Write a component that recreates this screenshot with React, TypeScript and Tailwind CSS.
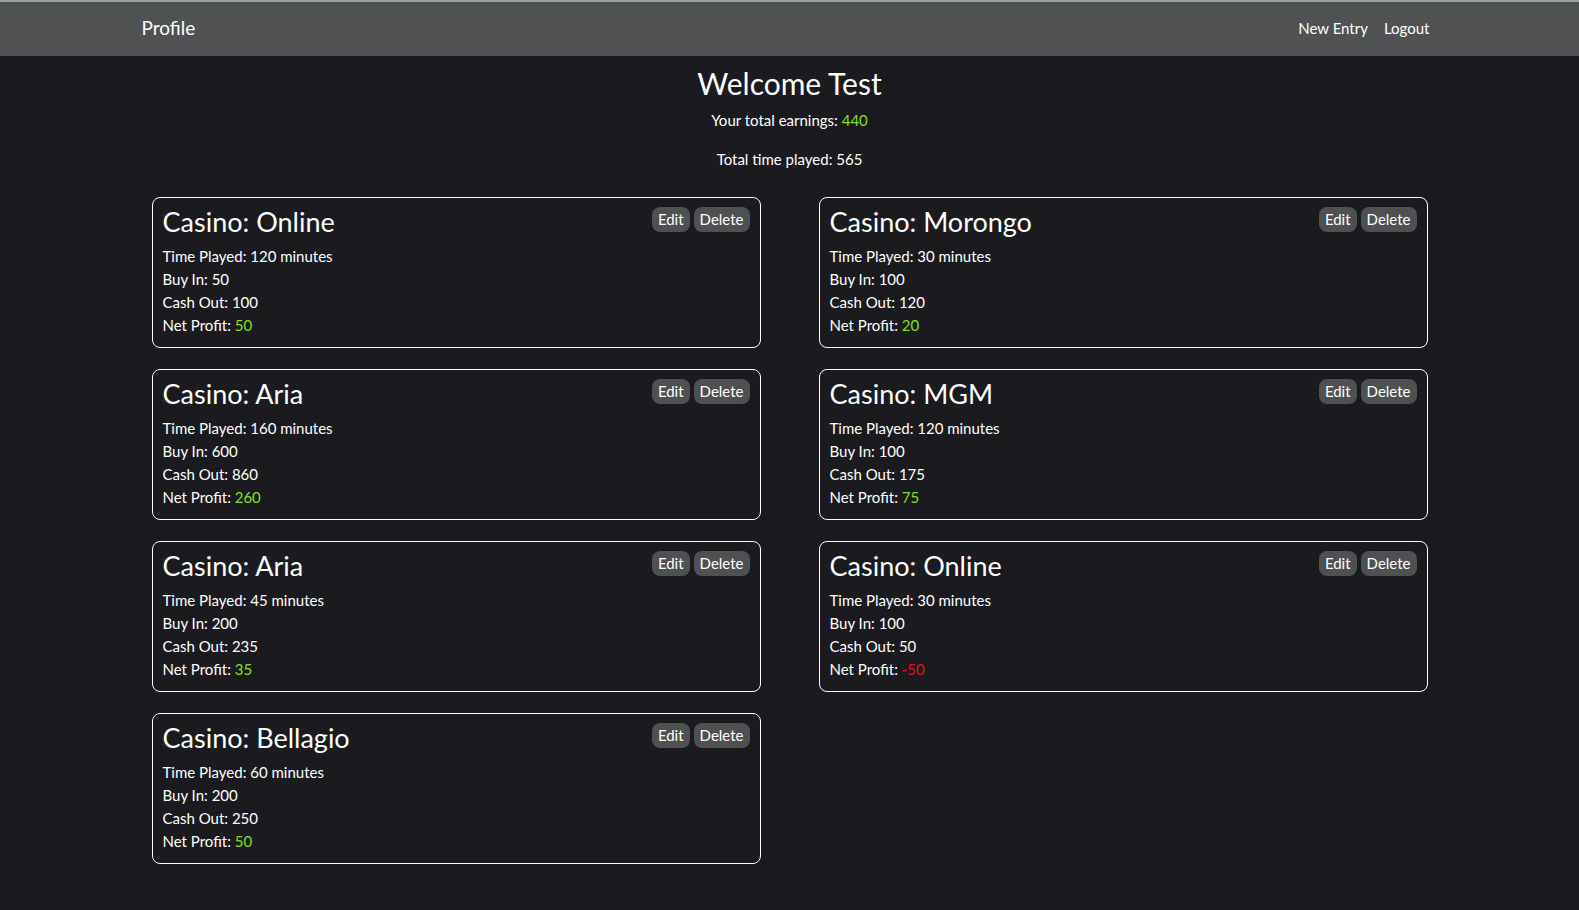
import React from 'react';

type Session = {
  casino: string;
  minutes: number;
  buyIn: number;
  cashOut: number;
};

const sessions: Session[] = [
  { casino: 'Online', minutes: 120, buyIn: 50, cashOut: 100 },
  { casino: 'Morongo', minutes: 30, buyIn: 100, cashOut: 120 },
  { casino: 'Aria', minutes: 160, buyIn: 600, cashOut: 860 },
  { casino: 'MGM', minutes: 120, buyIn: 100, cashOut: 175 },
  { casino: 'Aria', minutes: 45, buyIn: 200, cashOut: 235 },
  { casino: 'Online', minutes: 30, buyIn: 100, cashOut: 50 },
  { casino: 'Bellagio', minutes: 60, buyIn: 200, cashOut: 250 },
];

const SessionCard: React.FC<{ s: Session }> = ({ s }) => {
  const net = s.cashOut - s.buyIn;
  return (
    <div className="border border-white rounded-[8px] px-[10px] pt-[7px] pb-[10px] h-[151px]">
      <div className="flex justify-between items-start">
        <h2 className="text-[27px] leading-[34px] text-white">Casino: {s.casino}</h2>
        <div className="flex gap-[4px] mt-[2px]">
          <button className="bg-[#4f5052] text-white text-[15px] leading-[25px] px-[6px] rounded-[8px]">Edit</button>
          <button className="bg-[#4f5052] text-white text-[15px] leading-[25px] px-[6px] rounded-[8px]">Delete</button>
        </div>
      </div>
      <div className="mt-[6px] text-[15px] leading-[23px] text-white">
        <p>Time Played: {s.minutes} minutes</p>
        <p>Buy In: {s.buyIn}</p>
        <p>Cash Out: {s.cashOut}</p>
        <p>
          Net Profit: <span className={net >= 0 ? 'text-[#80e020]' : 'text-[#e3141a]'}>{net}</span>
        </p>
      </div>
    </div>
  );
};

export default function App() {
  return (
    <div className="min-h-[910px] bg-[#1b1b1f] text-white font-['Lato','Noto_Sans',sans-serif]">
      <nav className="h-[56px] bg-[#505153] border-t-[2px] border-[#9aa39b]">
        <div className="w-[1296px] mx-auto h-full flex items-center justify-between pb-[2px]">
          <span className="text-[19px]">Profile</span>
          <div className="flex text-[15px] gap-[16px] pr-[8px]">
            <span>New Entry</span>
            <span>Logout</span>
          </div>
        </div>
      </nav>

      <div className="text-center">
        <h1 className="text-[30px] leading-[38px] mt-[8px]">Welcome Test</h1>
        <p className="text-[15px] leading-[24px] mt-[6px]">
          Your total earnings: <span className="text-[#80e020]">440</span>
        </p>
        <p className="text-[15px] leading-[24px] mt-[15px]">Total time played: 565</p>
      </div>

      <div className="w-[1276px] mx-auto mt-[26px] grid grid-cols-2 gap-x-[58px] gap-y-[21px] pb-[40px]">
        {sessions.map((s, i) => (
          <SessionCard key={i} s={s} />
        ))}
      </div>
    </div>
  );
}
